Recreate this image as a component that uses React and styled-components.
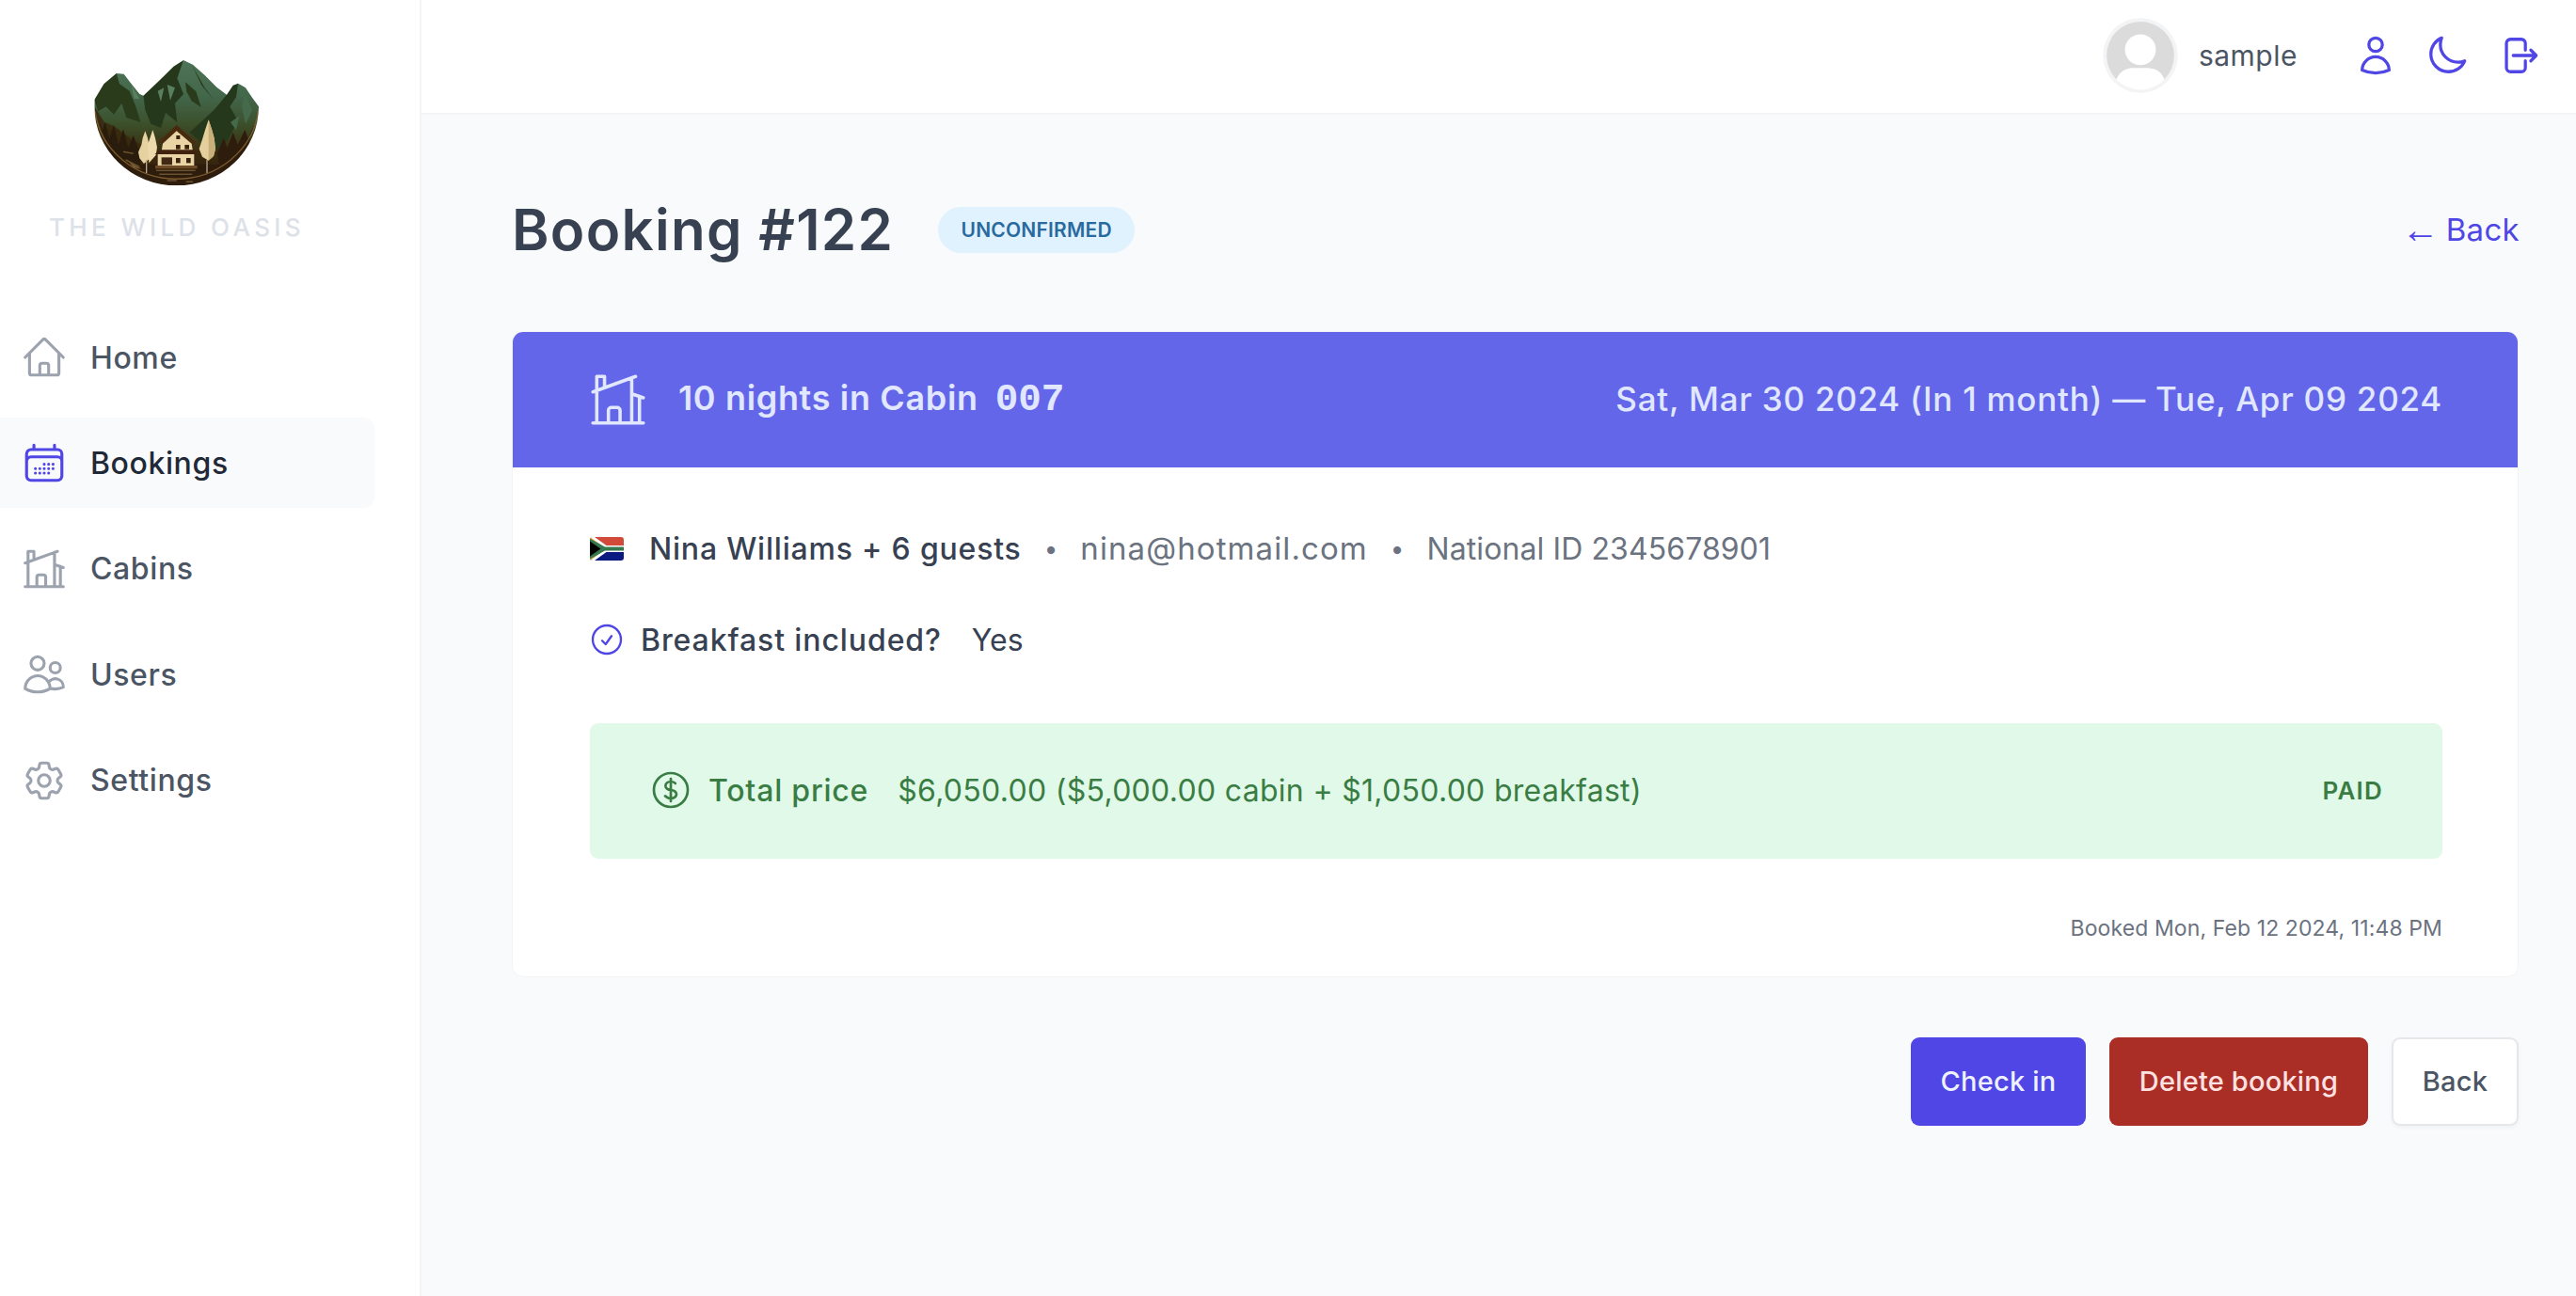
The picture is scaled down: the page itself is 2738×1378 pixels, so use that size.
import React from "react";
import styled, { createGlobalStyle } from "styled-components";
import {
  HiOutlineHome,
  HiOutlineCalendarDays,
  HiOutlineHomeModern,
  HiOutlineUsers,
  HiOutlineCog6Tooth,
  HiOutlineUser,
  HiOutlineMoon,
  HiOutlineArrowRightOnRectangle,
  HiOutlineCheckCircle,
  HiOutlineCurrencyDollar,
} from "react-icons/hi2";

const Global = createGlobalStyle`
  * { box-sizing: border-box; }
  html, body { margin: 0; padding: 0; height: 100%; }
  body { font-family: Inter, "Noto Sans", sans-serif; color: #374151; background: #f9fafb; }
`;

const Layout = styled.div`
  display: grid;
  grid-template-columns: 448px 1fr;
  height: 1378px;
  overflow: hidden;
`;

const Sidebar = styled.aside`
  background: #fff;
  border-right: 2px solid #f3f4f6;
  padding-right: 48px;
`;

const Brand = styled.div`
  width: 376px;
  padding-top: 50px;
  display: flex;
  flex-direction: column;
  align-items: center;
`;

const LogoArt = styled.svg`
  width: 220px;
  height: 170px;
  display: block;
  margin-right: 14px;
`;

const BrandName = styled.div`
  font-size: 26px;
  font-weight: 500;
  line-height: 34px;
  letter-spacing: 4.4px;
  color: #dde1e8;
  margin-top: 5px;
`;

const Nav = styled.nav`
  margin-top: 73px;
  display: flex;
  flex-direction: column;
  gap: 16.4px;
`;

const NavItem = styled.a`
  display: flex;
  align-items: center;
  gap: 24px;
  height: 96px;
  padding-left: 22px;
  border-radius: 0 12px 12px 0;
  font-size: 32px;
  font-weight: 500;
  letter-spacing: 0.6px;
  color: ${(p) => (p.$active ? "#1f2937" : "#4b5563")};
  background: ${(p) => (p.$active ? "#f9fafb" : "transparent")};
  svg {
    width: 50px;
    height: 50px;
    stroke-width: 1.5;
    color: ${(p) => (p.$active ? "#4f46e5" : "#9ca3af")};
    flex: none;
  }
`;

const Column = styled.div`
  display: flex;
  flex-direction: column;
  min-width: 0;
`;

const TopBar = styled.header`
  height: 122px;
  background: #fff;
  border-bottom: 2px solid #f3f4f6;
  display: flex;
  align-items: center;
  justify-content: flex-end;
  padding-right: 38px;
  padding-bottom: 2px;
`;

const UserBox = styled.div`
  display: flex;
  align-items: center;
  gap: 22px;
  margin-right: 60px;
`;

const Avatar = styled.svg`
  width: 80px;
  height: 80px;
  border-radius: 50%;
  display: block;
`;

const UserName = styled.span`
  font-size: 30px;
  font-weight: 400;
  letter-spacing: 0.5px;
  color: #4b5563;
`;

const TopIcons = styled.div`
  display: flex;
  align-items: center;
  gap: 30px;
  color: #4f46e5;
  svg {
    width: 46px;
    height: 46px;
    stroke-width: 1.7;
    display: block;
  }
`;

const Main = styled.main`
  flex: 1;
  padding: 88px 61px 0 96px;
  background: #f9fafb;
`;

const HeadRow = styled.div`
  height: 68px;
  display: flex;
  align-items: center;
  justify-content: space-between;
  margin-bottom: 74px;
`;

const HeadLeft = styled.div`
  display: flex;
  align-items: center;
  gap: 47px;
`;

const Title = styled.h1`
  margin: 0;
  font-size: 60px;
  line-height: 68px;
  font-weight: 600;
  color: #374151;
  letter-spacing: 1.3px;
`;

const Tag = styled.span`
  height: 49px;
  width: 209px;
  display: flex;
  align-items: center;
  justify-content: center;
  border-radius: 25px;
  background: #e0f2fe;
  color: #2a6a9e;
  font-size: 21px;
  font-weight: 600;
  letter-spacing: 0.2px;
  text-transform: uppercase;
`;

const BackLink = styled.a`
  font-size: 33px;
  letter-spacing: 0.3px;
  color: #4f46e5;
  font-weight: 400;
  margin-right: -1px;
  display: flex;
  align-items: center;
  gap: 7px;
`;

const BackArrow = styled.span`
  font-family: "Liberation Sans", sans-serif;
  font-size: 40px;
  line-height: 40px;
`;

const Card = styled.section`
  background: #fff;
  border: 1px solid #f3f4f6;
  border-radius: 12px;
  overflow: hidden;
`;

const CardHead = styled.div`
  height: 144px;
  background: #6366e9;
  color: #e0e7ff;
  display: flex;
  align-items: center;
  justify-content: space-between;
  padding: 0 80px 2px 79px;
`;

const CabinTitle = styled.div`
  display: flex;
  align-items: center;
  gap: 31px;
  font-size: 36px;
  font-weight: 600;
  letter-spacing: 0.65px;
  svg {
    width: 66px;
    height: 66px;
    stroke-width: 1.3;
    flex: none;
    margin-top: 2px;
  }
`;

const Code = styled.span`
  font-family: "Liberation Mono", monospace;
  font-weight: 700;
  font-size: 41px;
  letter-spacing: 0;
  margin-left: 18px;
`;

const Dates = styled.span`
  font-size: 35px;
  font-weight: 500;
  letter-spacing: 0.75px;
`;

const CardBody = styled.div`
  padding: 64px 80px 36px 82px;
`;

const GuestRow = styled.div`
  display: flex;
  align-items: center;
  height: 44px;
  font-size: 32px;
  color: #6b7280;
`;

const Flag = styled.svg`
  width: 36px;
  height: 25px;
  border-radius: 3px;
  flex: none;
  margin-right: 27px;
  display: block;
`;

const GuestName = styled.span`
  font-weight: 500;
  color: #374151;
  letter-spacing: 0.8px;
`;

const Email = styled.span`
  font-size: 33px;
  letter-spacing: 1.1px;
`;

const NationalId = styled.span`
  letter-spacing: 0.1px;
`;

const Bullet = styled.span`
  margin: 0 24px;
  color: #6b7280;
  font-size: 26px;
`;

const BreakfastRow = styled.div`
  display: flex;
  align-items: center;
  height: 44px;
  margin-top: 53px;
  font-size: 32px;
  color: #374151;
  svg {
    width: 40px;
    height: 40px;
    stroke-width: 1.4;
    color: #4f46e5;
    flex: none;
    margin-right: 16px;
    margin-left: -2px;
  }
`;

const RowLabel = styled.span`
  font-weight: 500;
  letter-spacing: 0.9px;
  margin-right: 32px;
`;

const PriceBox = styled.div`
  height: 144px;
  margin-top: 67px;
  border-radius: 9px;
  background: #e1f9e8;
  color: #3a7d44;
  display: flex;
  align-items: center;
  justify-content: space-between;
  padding: 0 63px 2px 62px;
  font-size: 32px;
`;

const PriceLeft = styled.div`
  display: flex;
  align-items: center;
  letter-spacing: 0.3px;
  svg {
    width: 48px;
    height: 48px;
    stroke-width: 1.35;
    flex: none;
    margin-right: 16px;
  }
`;

const PriceLabel = styled.span`
  font-weight: 500;
  letter-spacing: 0.8px;
  margin-right: 31px;
`;

const Paid = styled.span`
  font-size: 26px;
  font-weight: 600;
  letter-spacing: 1.2px;
`;

const Booked = styled.div`
  margin-top: 59px;
  height: 30px;
  line-height: 30px;
  text-align: right;
  font-size: 23px;
  letter-spacing: 0.1px;
  color: #6b7280;
`;

const Actions = styled.div`
  margin-top: 64px;
  display: flex;
  justify-content: flex-end;
  gap: 25px;
`;

const Button = styled.button`
  height: 94px;
  width: ${(p) => p.$w}px;
  border-radius: 9px;
  border: ${(p) => (p.$kind === "ghost" ? "2px solid #e5e7eb" : "none")};
  background: ${(p) =>
    p.$kind === "danger" ? "#aa2d26" : p.$kind === "ghost" ? "#fff" : "#4f46e5"};
  color: ${(p) =>
    p.$kind === "danger" ? "#fee2e2" : p.$kind === "ghost" ? "#4b5563" : "#eef2ff"};
  box-shadow: ${(p) => (p.$kind === "ghost" ? "0 2px 4px rgba(0,0,0,0.04)" : "none")};
  font-family: inherit;
  font-size: 29px;
  font-weight: 500;
  letter-spacing: 0.2px;
  padding: 0 0 2px;
`;

function Logo() {
  return (
    <LogoArt viewBox="0 0 660 510" aria-hidden="true">
      <defs>
        <linearGradient id="land" x1="0" y1="0" x2="0" y2="1">
          <stop offset="0" stopColor="#4e7557" />
          <stop offset="0.3" stopColor="#43674b" />
          <stop offset="0.52" stopColor="#3b4f2a" />
          <stop offset="0.72" stopColor="#3a2c10" />
          <stop offset="1" stopColor="#2c1a08" />
        </linearGradient>
        <filter id="soft">
          <feGaussianBlur stdDeviation="1.1" />
        </filter>
        <clipPath id="sil">
          <path d="M88 168 L118 118 L158 84 L182 86 L205 116 L232 150 L244 155 L300 102 L340 62 L372 42 L402 56 L440 90 L478 128 L510 152 L530 122 L546 116 L570 130 L590 160 L612 190 A262 252 0 0 1 88 190 Z" />
        </clipPath>
      </defs>
      <g filter="url(#soft)" clipPath="url(#sil)">
        <rect x="80" y="30" width="540" height="420" fill="url(#land)" />
        <path d="M88 168 L118 118 L158 84 L168 118 L200 140 L220 190 L235 240 L190 225 L175 180 L150 215 L125 190 L100 205Z" fill="#2a3a1d" />
        <path d="M244 155 L300 102 L340 62 L372 42 L352 100 L372 150 L345 180 L352 240 L315 210 L300 258 L268 245 L250 200Z" fill="#28371b" />
        <path d="M378 112 L412 142 L428 192 L398 172 L382 142Z" fill="#2a3a1e" />
        <path d="M400 60 L440 130 L468 168 L430 122Z" fill="#2a3a1e" />
        <path d="M320 120 L345 130 L330 170Z M205 120 L232 165 L215 165Z M290 140 L310 130 L300 175Z" fill="#59805f" />
        <path d="M392 272 L470 200 L510 152 L530 122 L546 116 L540 160 L520 190 L545 235 L515 295 L470 335 L430 305Z" fill="#28371a" />
        <path d="M568 150 L592 200 L570 245 L558 190Z M522 240 L550 220 L540 265Z" fill="#456a4c" />
        <path d="M88 190 L120 240 L150 252 L215 300 L300 340 L300 450 L88 450Z" fill="#3a280e" opacity="0.85" />
        <path d="M100 220 L112 272 L122 240 L136 292 L150 250 L165 312 L180 262 L196 322 L212 282 L235 342 L235 402 L150 402Z" fill="#2c1a07" />
        <path d="M480 340 L500 290 L512 322 L530 272 L545 312 L568 264 L578 292 L600 242 L560 372 L490 402Z" fill="#2e1e09" />
        <path d="M88 358 L200 376 L350 372 L500 376 L620 345 L620 450 L88 450Z" fill="#2e1b08" />
        <path d="M180 334 L212 340 M188 360 L232 382 M285 394 L410 394 M295 406 L400 406 M320 426 L350 426 M380 430 L402 430" stroke="#6b5230" strokeWidth="4.5" fill="none" />
        <path d="M198 366 L240 390 L212 384Z" fill="#7a5c34" />
        <path d="M250 268 L258 290 L262 312 L268 340 L262 358 L246 372 L232 355 L228 335 L238 312 L242 290Z" fill="#e6d2a0" />
        <path d="M274 264 L282 290 L288 320 L284 345 L262 370 L258 312Z" fill="#edd9ab" />
        <rect x="252" y="360" width="4" height="42" fill="#b9a98a" />
        <path d="M452 232 L462 262 L470 290 L474 325 L468 348 L452 362 L432 350 L422 325 L432 295 L442 262Z" fill="#e4cf9d" />
        <path d="M452 232 L462 262 L470 290 L474 325 L468 348 L452 362Z" fill="#c9b07a" />
        <rect x="445" y="360" width="4" height="42" fill="#b9a98a" />
        <path d="M350 248 L412 306 L402 310 L350 268 L304 308 L292 304Z" fill="#4a2a11" />
        <path d="M350 268 L398 308 L402 332 L302 332 L306 308Z" fill="#e8d4a4" />
        <path d="M280 342 L300 328 L404 328 L416 342Z" fill="#3f2410" />
        <rect x="290" y="342" width="116" height="36" fill="#e8d4a4" />
        <rect x="302" y="352" width="34" height="24" fill="#3f2a14" />
        <rect x="348" y="354" width="14" height="16" fill="#3a2410" />
        <rect x="381" y="354" width="14" height="16" fill="#3a2410" />
        <rect x="348" y="312" width="14" height="14" fill="#3a2410" />
        <rect x="376" y="312" width="14" height="14" fill="#3a2410" />
        <rect x="349" y="282" width="12" height="12" fill="#3a2410" />
        <rect x="282" y="378" width="134" height="10" fill="#6d4c25" />
        <path d="M90 205 A262 246 0 0 0 610 205" fill="none" stroke="#7a5a30" strokeWidth="4" />
      </g>
    </LogoArt>
  );
}

function SAFlag() {
  return (
    <Flag viewBox="0 0 36 25" aria-hidden="true">
      <rect width="36" height="12.5" fill="#d24a3a" />
      <rect y="12.5" width="36" height="12.5" fill="#0a1a80" />
      <path d="M0 0 L17 12.5 L0 25Z" fill="#ffb915" />
      <path d="M0 0 H5 L17.5 9 H36 V16 H17.5 L5 25 H0 L17 12.5Z" fill="#fff" />
      <path d="M0 1.5 L16 10.4 H36 V14.6 H16 L0 23.5 V20 L11 12.5 L0 5Z" fill="#35794f" />
      <path d="M0 4.5 L11.5 12.5 L0 20.5Z" fill="#000" />
    </Flag>
  );
}

export default function App() {
  const items = [
    { label: "Home", Icon: HiOutlineHome },
    { label: "Bookings", Icon: HiOutlineCalendarDays, active: true },
    { label: "Cabins", Icon: HiOutlineHomeModern },
    { label: "Users", Icon: HiOutlineUsers },
    { label: "Settings", Icon: HiOutlineCog6Tooth },
  ];
  return (
    <>
      <Global />
      <Layout>
        <Sidebar>
          <Brand>
            <Logo />
            <BrandName>THE WILD OASIS</BrandName>
          </Brand>
          <Nav>
            {items.map(({ label, Icon, active }) => (
              <NavItem key={label} $active={active}>
                <Icon />
                {label}
              </NavItem>
            ))}
          </Nav>
        </Sidebar>
        <Column>
          <TopBar>
            <UserBox>
              <Avatar viewBox="0 0 78 78" aria-hidden="true">
                <circle cx="39" cy="39" r="39" fill="#f3f4f6" />
                <circle cx="39" cy="39" r="35" fill="#dbdbdb" />
                <circle cx="39" cy="33" r="16" fill="#fff" />
                <path d="M14 64 C18 54 26 52 32 52 H46 C52 52 60 54 64 64 A35 35 0 0 1 14 64Z" fill="#fff" />
              </Avatar>
              <UserName>sample</UserName>
            </UserBox>
            <TopIcons>
              <HiOutlineUser />
              <HiOutlineMoon />
              <HiOutlineArrowRightOnRectangle />
            </TopIcons>
          </TopBar>
          <Main>
            <HeadRow>
              <HeadLeft>
                <Title>Booking #122</Title>
                <Tag>Unconfirmed</Tag>
              </HeadLeft>
              <BackLink>
                <BackArrow>←</BackArrow>
                Back
              </BackLink>
            </HeadRow>
            <Card>
              <CardHead>
                <CabinTitle>
                  <HiOutlineHomeModern />
                  <span>
                    10 nights in Cabin<Code>007</Code>
                  </span>
                </CabinTitle>
                <Dates>Sat, Mar 30 2024 (In 1 month) — Tue, Apr 09 2024</Dates>
              </CardHead>
              <CardBody>
                <GuestRow>
                  <SAFlag />
                  <GuestName>Nina Williams + 6 guests</GuestName>
                  <Bullet>•</Bullet>
                  <Email>nina@hotmail.com</Email>
                  <Bullet>•</Bullet>
                  <NationalId>National ID 2345678901</NationalId>
                </GuestRow>
                <BreakfastRow>
                  <HiOutlineCheckCircle />
                  <RowLabel>Breakfast included?</RowLabel>
                  <span>Yes</span>
                </BreakfastRow>
                <PriceBox>
                  <PriceLeft>
                    <HiOutlineCurrencyDollar />
                    <PriceLabel>Total price</PriceLabel>
                    <span>$6,050.00 ($5,000.00 cabin + $1,050.00 breakfast)</span>
                  </PriceLeft>
                  <Paid>PAID</Paid>
                </PriceBox>
                <Booked>Booked Mon, Feb 12 2024, 11:48 PM</Booked>
              </CardBody>
            </Card>
            <Actions>
              <Button $w={186}>Check in</Button>
              <Button $w={275} $kind="danger">Delete booking</Button>
              <Button $w={135} $kind="ghost">Back</Button>
            </Actions>
          </Main>
        </Column>
      </Layout>
    </>
  );
}
